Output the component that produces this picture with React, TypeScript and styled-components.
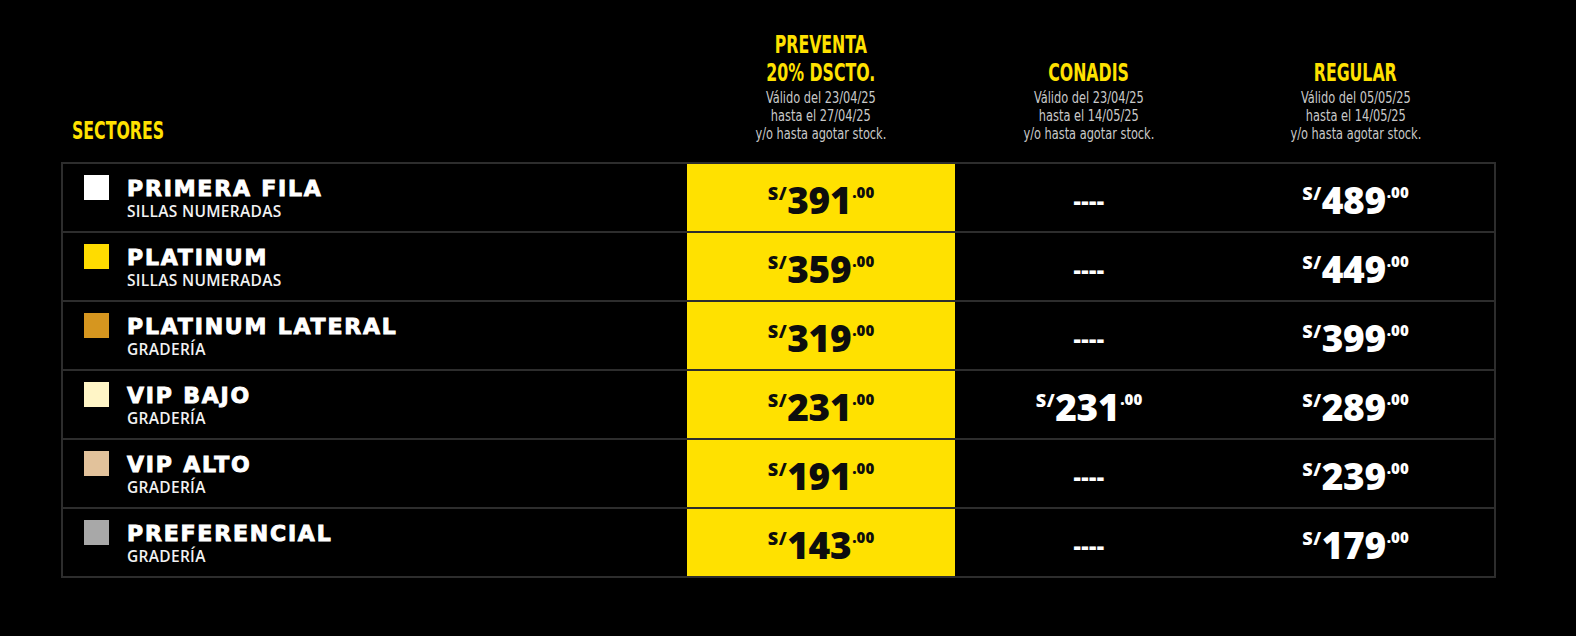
import React from "react";
import styled, { createGlobalStyle } from "styled-components";

const GlobalStyle = createGlobalStyle`
  html, body {
    margin: 0;
    padding: 0;
    background: #000;
  }
  body {
    min-height: 100vh;
    font-family: "Open Sans", "Liberation Sans", sans-serif;
  }
`;

const YELLOW = "#ffe100";
const LINE = "#2d2d2d";
const COLUMNS = "624px 268px 268px 1fr";
const CONDENSED = `"Liberation Sans Narrow", "DejaVu Sans Condensed", "Liberation Sans", sans-serif`;

const Page = styled.main`
  display: flex;
  flex-direction: column;
  width: 1576px;
  min-height: 636px;
  padding: 0 0 0 61px;
  box-sizing: border-box;
  background: #000;
`;

const HeaderRow = styled.div`
  display: grid;
  grid-template-columns: ${COLUMNS};
  width: 1435px;
  height: 162px;
  padding: 0 2px;
  box-sizing: border-box;
  align-items: end;
`;

const SectorsLabel = styled.div`
  padding: 0 0 17px 9px;
`;

const HeaderCell = styled.div<{ $padRight?: number }>`
  display: flex;
  flex-direction: column;
  align-items: center;
  padding: 0 ${(p) => p.$padRight ?? 0}px 19px 0;
  text-align: center;
`;

const HeaderTitle = styled.div<{ $origin?: string }>`
  font-family: ${CONDENSED};
  font-weight: 700;
  font-size: 25px;
  line-height: 28px;
  color: ${YELLOW};
  white-space: nowrap;
  transform: scaleX(0.7);
  transform-origin: ${(p) => p.$origin ?? "center"};
`;

const HeaderNote = styled.div`
  margin-top: 2px;
  font-family: ${CONDENSED};
  font-size: 16px;
  line-height: 18px;
  color: #c9c9c9;
  white-space: nowrap;
  transform: scaleX(0.79);
`;

const Table = styled.section`
  display: flex;
  flex-direction: column;
  width: 1435px;
  border: 2px solid ${LINE};
  box-sizing: border-box;
`;

const Row = styled.div`
  display: grid;
  grid-template-columns: ${COLUMNS};
  height: 67px;

  & + & {
    border-top: 2px solid ${LINE};
  }
`;

const SectorCell = styled.div`
  display: flex;
  align-items: flex-start;
  gap: 18px;
  padding: 11px 0 0 21px;
`;

const Swatch = styled.span<{ $color: string }>`
  flex: none;
  width: 25px;
  height: 25px;
  background: ${(p) => p.$color};
`;

const SectorText = styled.div`
  display: flex;
  flex-direction: column;
  margin-top: 3px;
`;

const SectorName = styled.div`
  font-family: "DejaVu Sans", "Liberation Sans", sans-serif;
  font-weight: 700;
  font-size: 22px;
  line-height: 22px;
  letter-spacing: 1.8px;
  color: #fff;
  -webkit-text-stroke: 0.9px #fff;
  white-space: nowrap;
`;

const SectorSub = styled.div`
  margin-top: 3px;
  font-family: "Open Sans", "Liberation Sans", sans-serif;
  font-weight: 600;
  font-size: 15.5px;
  line-height: 17px;
  letter-spacing: 0.3px;
  color: #f2f2f2;
  white-space: nowrap;
`;

const PriceCell = styled.div<{ $highlight?: boolean; $padRight?: number }>`
  display: flex;
  align-items: center;
  justify-content: center;
  padding-right: ${(p) => p.$padRight ?? 0}px;
  background: ${(p) => (p.$highlight ? YELLOW : "transparent")};
  color: ${(p) => (p.$highlight ? "#0d0d0d" : "#fff")};
`;

const Price = styled.div`
  display: flex;
  align-items: flex-start;
  margin-top: 3px;
  font-family: "Open Sans", "Liberation Sans", sans-serif;
  font-weight: 800;
`;

const Currency = styled.span`
  font-size: 18px;
  line-height: 1;
  letter-spacing: 0.5px;
  margin: 3px 0 0 0;
`;

const Amount = styled.span`
  font-size: 37px;
  line-height: 1;
  letter-spacing: -0.3px;
`;

const Cents = styled.span`
  font-size: 15px;
  line-height: 1;
  margin: 4px 0 0 1px;
`;

const Empty = styled.span`
  font-family: "Open Sans", "Liberation Sans", sans-serif;
  font-weight: 800;
  font-size: 23px;
  line-height: 1;
  letter-spacing: 0.5px;
  margin-top: 5px;
`;

type Sector = {
  name: string;
  sub: string;
  color: string;
  preventa: string;
  conadis?: string;
  regular: string;
};

const sectors: Sector[] = [
  { name: "PRIMERA FILA", sub: "SILLAS NUMERADAS", color: "#ffffff", preventa: "391", regular: "489" },
  { name: "PLATINUM", sub: "SILLAS NUMERADAS", color: "#ffdc00", preventa: "359", regular: "449" },
  { name: "PLATINUM LATERAL", sub: "GRADERÍA", color: "#d6961f", preventa: "319", regular: "399" },
  { name: "VIP BAJO", sub: "GRADERÍA", color: "#fff5c6", preventa: "231", conadis: "231", regular: "289" },
  { name: "VIP ALTO", sub: "GRADERÍA", color: "#e2c29b", preventa: "191", regular: "239" },
  { name: "PREFERENCIAL", sub: "GRADERÍA", color: "#a8a8a8", preventa: "143", regular: "179" },
];

function PriceTag({ value }: { value?: string }) {
  if (!value) return <Empty>----</Empty>;
  return (
    <Price>
      <Currency>S/</Currency>
      <Amount>{value}</Amount>
      <Cents>.00</Cents>
    </Price>
  );
}

export default function App() {
  return (
    <>
      <GlobalStyle />
      <Page>
        <HeaderRow>
          <SectorsLabel>
            <HeaderTitle $origin="left">SECTORES</HeaderTitle>
          </SectorsLabel>
          <HeaderCell>
            <HeaderTitle>PREVENTA</HeaderTitle>
            <HeaderTitle>20% DSCTO.</HeaderTitle>
            <HeaderNote>
              Válido del 23/04/25
              <br />
              hasta el 27/04/25
              <br />
              y/o hasta agotar stock.
            </HeaderNote>
          </HeaderCell>
          <HeaderCell>
            <HeaderTitle>CONADIS</HeaderTitle>
            <HeaderNote>
              Válido del 23/04/25
              <br />
              hasta el 14/05/25
              <br />
              y/o hasta agotar stock.
            </HeaderNote>
          </HeaderCell>
          <HeaderCell $padRight={6}>
            <HeaderTitle>REGULAR</HeaderTitle>
            <HeaderNote>
              Válido del 05/05/25
              <br />
              hasta el 14/05/25
              <br />
              y/o hasta agotar stock.
            </HeaderNote>
          </HeaderCell>
        </HeaderRow>

        <Table>
          {sectors.map((s) => (
            <Row key={s.name}>
              <SectorCell>
                <Swatch $color={s.color} />
                <SectorText>
                  <SectorName>{s.name}</SectorName>
                  <SectorSub>{s.sub}</SectorSub>
                </SectorText>
              </SectorCell>
              <PriceCell $highlight>
                <PriceTag value={s.preventa} />
              </PriceCell>
              <PriceCell>
                <PriceTag value={s.conadis} />
              </PriceCell>
              <PriceCell $padRight={6}>
                <PriceTag value={s.regular} />
              </PriceCell>
            </Row>
          ))}
        </Table>
      </Page>
    </>
  );
}
